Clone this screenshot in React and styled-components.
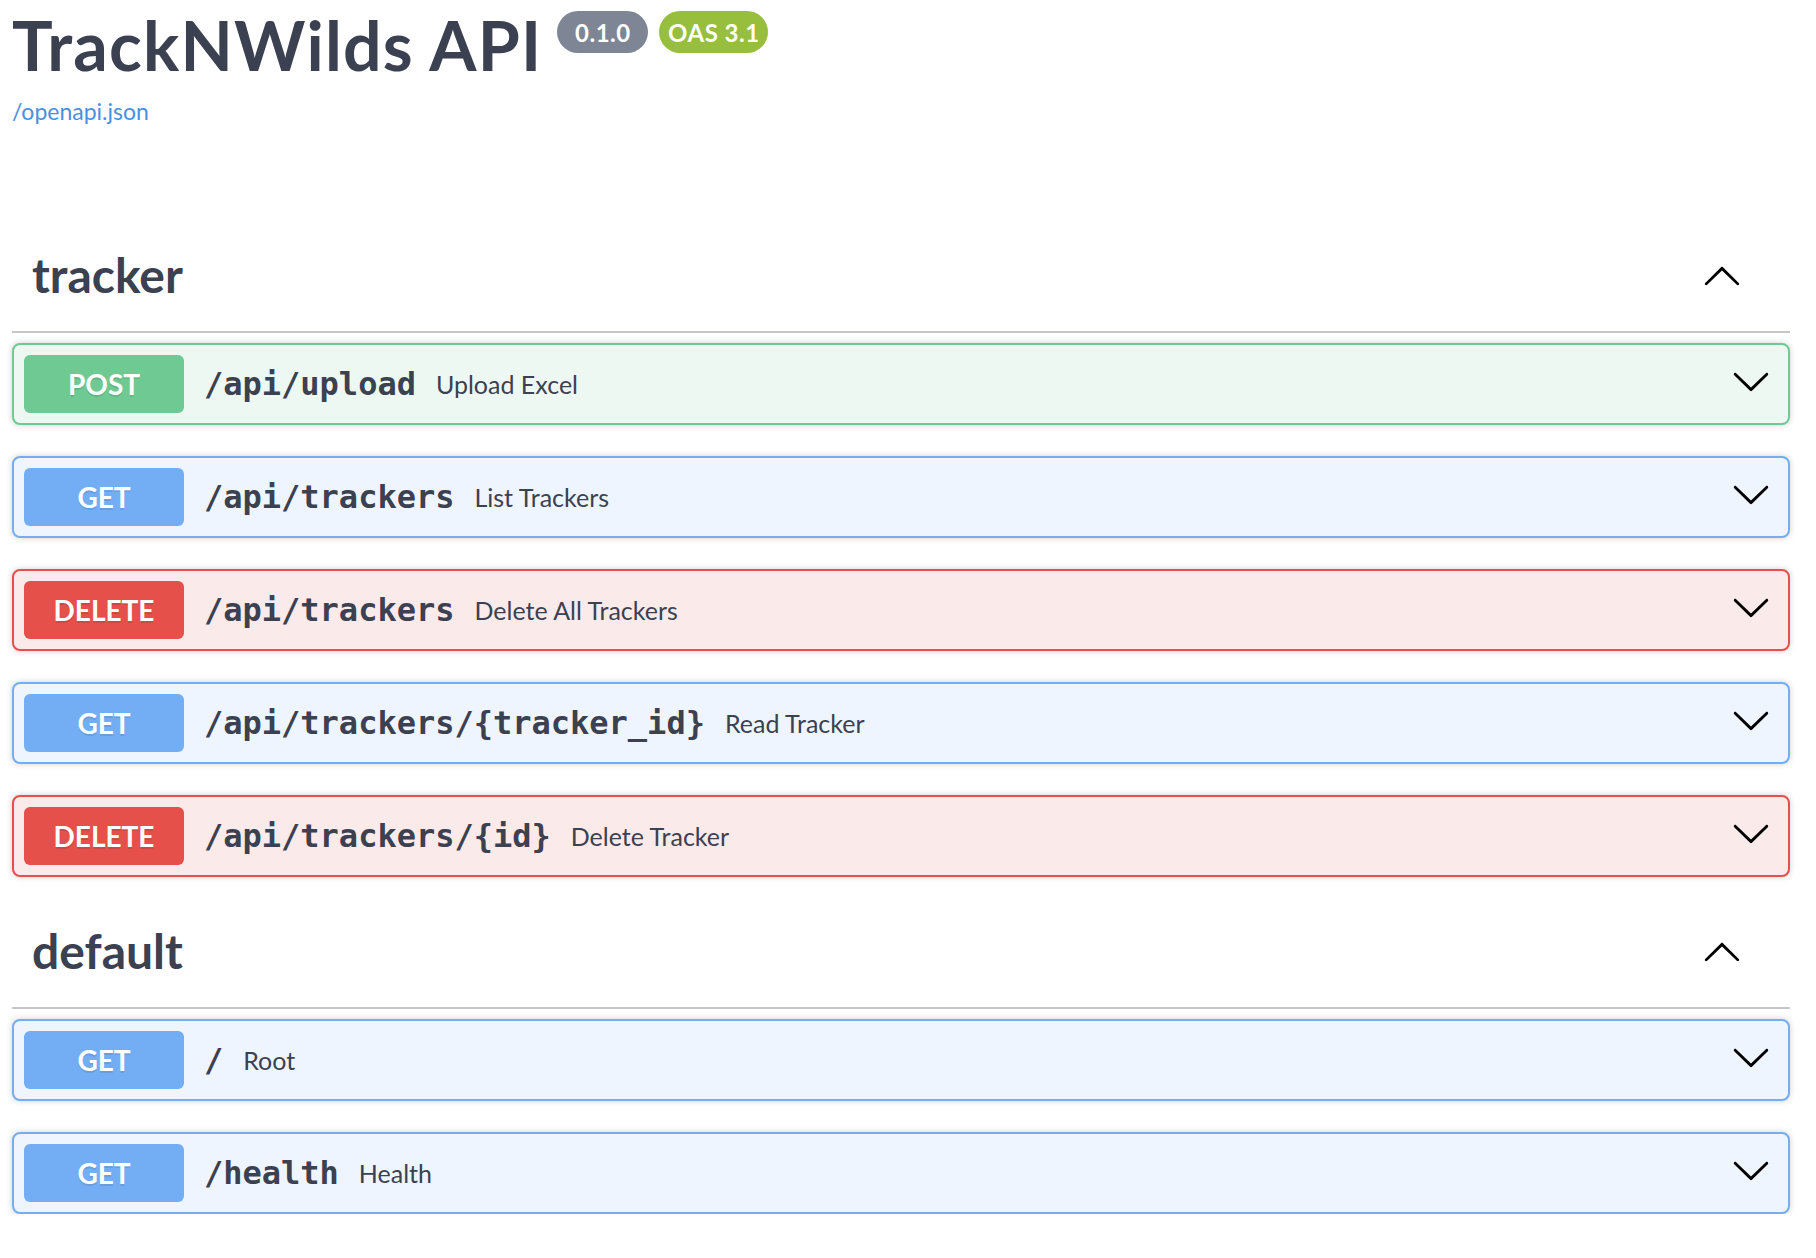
import React from 'react';
import styled, { createGlobalStyle } from 'styled-components';

const GlobalStyle = createGlobalStyle`
  html, body {
    margin: 0;
    padding: 0;
    background: #fff;
  }
  body {
    font-family: Lato, "Open Sans", sans-serif;
    color: #3b4151;
  }
`;

const METHOD_COLORS = {
  POST: { main: '#6fc993', bg: '#eef8f3' },
  GET: { main: '#73aef5', bg: '#eff5fe' },
  DELETE: { main: '#e5504a', bg: '#fbeaea' },
};

const Page = styled.div`
  padding: 0 26px 0 12px;
`;

const Info = styled.div`
  margin-bottom: 105px;
`;

const TitleRow = styled.div`
  display: flex;
  align-items: flex-start;
`;

const Title = styled.h2`
  margin: 0;
  padding: 3px 0 0 0;
  font-size: 68px;
  line-height: 84px;
  font-weight: 700;
  letter-spacing: 1.2px;
  color: #3b4151;
`;

const Badge = styled.span`
  display: inline-flex;
  align-items: center;
  justify-content: center;
  box-sizing: border-box;
  width: ${({ $w }) => $w}px;
  height: 42px;
  margin: 11px 0 0 ${({ $ml }) => $ml}px;
  border-radius: 21px;
  background: ${({ $bg }) => $bg};
  color: #fff;
  font-size: 24px;
  font-weight: 700;
  letter-spacing: 0.5px;
`;

const SpecLink = styled.a`
  display: inline-block;
  margin-top: 9px;
  font-size: 23px;
  line-height: 30px;
  color: #4990e2;
  text-decoration: none;
`;

const TagSection = styled.section`
  & + & {
    margin-top: 30px;
  }
`;

const TagHeader = styled.h3`
  display: flex;
  align-items: center;
  margin: 0 0 10px 0;
  padding: 12px 48px 24px 20px;
  border-bottom: 2px solid rgba(59, 65, 81, 0.3);
  font-size: 48px;
  line-height: 64px;
  font-weight: 700;
  color: #3b4151;
`;

const TagName = styled.span`
  flex: 1;
`;

const OpList = styled.div`
  display: flex;
  flex-direction: column;
  gap: 31px;
`;

const Opblock = styled.div`
  display: flex;
  align-items: center;
  box-sizing: border-box;
  height: 82px;
  padding: 10px;
  border: 2px solid ${({ $main }) => $main};
  border-radius: 8px;
  background: ${({ $bg }) => $bg};
  box-shadow: 0 0 6px rgba(0, 0, 0, 0.19);
`;

const Method = styled.span`
  display: flex;
  align-items: center;
  justify-content: center;
  width: 160px;
  height: 58px;
  flex-shrink: 0;
  border-radius: 6px;
  background: ${({ $main }) => $main};
  color: #fff;
  font-size: 28px;
  font-weight: 700;
  text-shadow: 0 2px 0 rgba(0, 0, 0, 0.1);
`;

const Path = styled.span`
  padding: 0 20px;
  font-family: "DejaVu Sans Mono", "Liberation Mono", monospace;
  font-size: 32px;
  font-weight: 700;
  color: #3b4151;
`;

const Summary = styled.span`
  flex: 1;
  font-size: 25px;
  color: #3b4151;
`;

const Arrow = styled.svg`
  width: 40px;
  height: 40px;
  flex-shrink: 0;
  margin: ${({ $m }) => $m};
`;

const DOWN = 'M17.418 6.109c.272-.268.709-.268.979 0s.271.701 0 .969l-7.908 7.83c-.27.268-.707.268-.979 0l-7.908-7.83c-.27-.268-.27-.701 0-.969.271-.268.709-.268.979 0L10 13.25l7.418-7.141z';
const UP = 'M17.418 14.908c.272.268.709.268.979 0s.271-.701 0-.969l-7.908-7.83c-.27-.268-.707-.268-.979 0l-7.908 7.83c-.27.268-.27.701 0 .969.271.268.709.268.979 0L10 7.767l7.418 7.141z';

const Chevron = ({ d, m }) => (
  <Arrow viewBox="0 0 20 20" $m={m}>
    <path d={d} fill="#000" />
  </Arrow>
);

const tags = [
  {
    name: 'tracker',
    ops: [
      { method: 'POST', path: '/api/upload', summary: 'Upload Excel' },
      { method: 'GET', path: '/api/trackers', summary: 'List Trackers' },
      { method: 'DELETE', path: '/api/trackers', summary: 'Delete All Trackers' },
      { method: 'GET', path: '/api/trackers/{tracker_id}', summary: 'Read Tracker' },
      { method: 'DELETE', path: '/api/trackers/{id}', summary: 'Delete Tracker' },
    ],
  },
  {
    name: 'default',
    ops: [
      { method: 'GET', path: '/', summary: 'Root' },
      { method: 'GET', path: '/health', summary: 'Health' },
    ],
  },
];

const Operation = ({ method, path, summary }) => {
  const c = METHOD_COLORS[method];
  return (
    <Opblock $main={c.main} $bg={c.bg}>
      <Method $main={c.main}>{method}</Method>
      <Path>{path}</Path>
      <Summary>{summary}</Summary>
      <Chevron d={DOWN} m="0 7px 6px 0" />
    </Opblock>
  );
};

export default function App() {
  return (
    <>
      <GlobalStyle />
      <Page>
        <Info>
          <TitleRow>
            <Title>TrackNWilds API</Title>
            <Badge $bg="#7e8594" $w={91} $ml={15}>0.1.0</Badge>
            <Badge $bg="#97be3c" $w={109} $ml={11}>OAS 3.1</Badge>
          </TitleRow>
          <SpecLink href="#">/openapi.json</SpecLink>
        </Info>
        {tags.map((tag) => (
          <TagSection key={tag.name}>
            <TagHeader>
              <TagName>{tag.name}</TagName>
              <Chevron d={UP} m="0" />
            </TagHeader>
            <OpList>
              {tag.ops.map((op, i) => (
                <Operation key={i} {...op} />
              ))}
            </OpList>
          </TagSection>
        ))}
      </Page>
    </>
  );
}
